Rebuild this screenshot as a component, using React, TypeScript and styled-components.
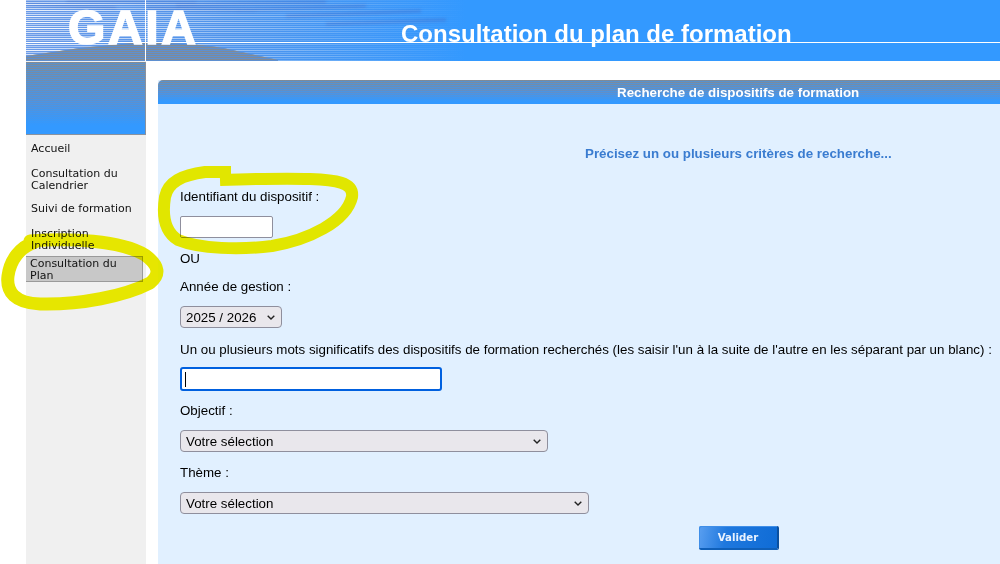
import styled, { createGlobalStyle } from "styled-components";

const GlobalStyle = createGlobalStyle`
  html, body {
    margin: 0;
    padding: 0;
    background: #fff;
    overflow: hidden;
  }
  body {
    font-family: "Liberation Sans", Arial, sans-serif;
  }
`;

const menuItems = [
  { label: "Accueil", top: 8 },
  { label: "Consultation du Calendrier", top: 13 },
  { label: "Suivi de formation", top: 11 },
  { label: "Inscription Individuelle", top: 13 },
];

// pseudo random opacity per row so the sky streaks don't look regular
const rowOpacity = (y: number) => 0.4 + (((y * 37) % 17) / 17) * 0.6;
const skyRows = Array.from({ length: 31 }, (_, i) => i * 2);
const hillPath = "M0 56 L54 48 L107 43 L135 43 C160 44 180 45 197 48 L252 60 L252 61 L0 61 Z";
const cloudStreaks = [
  "M40 1 L170 3",
  "M150 5 L300 2",
  "M210 10 L340 6",
  "M120 8 L230 10",
  "M260 16 L395 11",
  "M300 24 L420 20",
  "M0 4 L90 8",
];

const Highlights = () => (
  <Overlay width="1000" height="564" viewBox="0 0 1000 564">
    <g fill="none" stroke="#e6e600" strokeLinejoin="round">
      <path
        strokeWidth="12"
        d="M231 172 L205 172 C182 175 168 182 165 197 C162 216 165 232 178 240 C200 249 240 250 272 246 C308 240 346 222 352 197 C354 182 335 180 310 179 C285 178 250 179 220 180"
      />
      <path
        strokeWidth="13"
        strokeLinecap="round"
        d="M30 241 C70 238 120 240 145 255 C160 266 160 275 150 283 C125 296 80 305 40 304 C15 303 6 292 8 276 C10 260 20 247 35 242"
      />
    </g>
  </Overlay>
);

const Sky = () => (
  <SkyArt width="974" height="61" viewBox="0 0 974 61">
    <defs>
      <linearGradient id="base" x1="0" y1="0" x2="440" y2="0" gradientUnits="userSpaceOnUse">
        <stop offset="0" stopColor="#6a9ae8" />
        <stop offset="0.45" stopColor="#4f94ec" />
        <stop offset="1" stopColor="#3399ff" />
      </linearGradient>
      <linearGradient id="streak" x1="0" y1="0" x2="440" y2="0" gradientUnits="userSpaceOnUse">
        <stop offset="0" stopColor="#fff" stopOpacity="1" />
        <stop offset="0.45" stopColor="#fff" stopOpacity="0.5" />
        <stop offset="1" stopColor="#fff" stopOpacity="0" />
      </linearGradient>
      <pattern id="lines" width="4" height="2" patternUnits="userSpaceOnUse">
        <rect width="4" height="1" fill="#5f90d0" />
      </pattern>
      <filter id="soft" filterUnits="userSpaceOnUse" x="0" y="0" width="500" height="61">
        <feGaussianBlur stdDeviation="1.5" />
      </filter>
    </defs>
    <rect width="974" height="61" fill="url(#base)" />
    <g fill="none" stroke="#3f6fcc" strokeWidth="3" opacity="0.5" filter="url(#soft)">
      {cloudStreaks.map((d) => (
        <path key={d} d={d} />
      ))}
    </g>
    {skyRows.map((y) => (
      <rect key={y} x="0" y={y} width="440" height="1" fill="url(#streak)" opacity={rowOpacity(y)} />
    ))}
    <path d={hillPath} fill="#808a96" />
    <path d={hillPath} fill="url(#lines)" />
  </SkyArt>
);

const SelectField = ({ width, top, label }: { width: number; top: number; label: string }) => (
  <SelectWrap $width={width} $top={top}>
    <Select>
      <option>{label}</option>
    </Select>
    <Chevron width="8" height="5" viewBox="0 0 8 5">
      <path d="M0.7 0.7 L4 4 L7.3 0.7" fill="none" stroke="#222" strokeWidth="1.4" />
    </Chevron>
  </SelectWrap>
);

export default function App() {
  return (
    <>
      <GlobalStyle />
      <Page>
        <Banner>
          <Sky />
          <BannerLogo>GAIA</BannerLogo>
          <BannerTitle>Consultation du plan de formation</BannerTitle>
          <BannerRuleH />
          <BannerRuleV />
        </Banner>
        <Body>
          <Sidebar>
            <SidebarCap />
            <Menu>
              {menuItems.map((item) => (
                <MenuItem key={item.label} $top={item.top}>
                  {item.label}
                </MenuItem>
              ))}
              <MenuItemActive>Consultation du Plan</MenuItemActive>
            </Menu>
          </Sidebar>
          <Panel>
            <PanelHeader>Recherche de dispositifs de formation</PanelHeader>
            <PanelBody>
              <Hint>Précisez un ou plusieurs critères de recherche...</Hint>
              <Label $top={27}>Identifiant du dispositif :</Label>
              <TextInput />
              <Label $top={13}>OU</Label>
              <Label $top={12}>Année de gestion :</Label>
              <SelectField width={102} top={11} label="2025 / 2026" />
              <Label $top={14}>
                Un ou plusieurs mots significatifs des dispositifs de formation recherchés (les saisir l'un à la suite de
                l'autre en les séparant par un blanc) :
              </Label>
              <FocusedInput>
                <Caret />
              </FocusedInput>
              <Label $top={12}>Objectif :</Label>
              <SelectField width={368} top={11} label="Votre sélection" />
              <Label $top={13}>Thème :</Label>
              <SelectField width={409} top={11} label="Votre sélection" />
              <SubmitRow>
                <SubmitButton type="button">Valider</SubmitButton>
              </SubmitRow>
            </PanelBody>
          </Panel>
        </Body>
        <Highlights />
      </Page>
    </>
  );
}

const capBackground = `
  repeating-linear-gradient(to bottom, transparent 0 1px, rgba(51, 153, 255, 0.5) 1px 2px),
  linear-gradient(to bottom, #808a96 0%, #5f90cc 55%, #3399ff 88%)
`;

const Page = styled.div`
  position: relative;
  width: 1000px;
  height: 564px;
  overflow: hidden;
  padding-left: 26px;
  box-sizing: border-box;
`;

const Overlay = styled.svg`
  position: absolute;
  left: 0;
  top: 0;
  pointer-events: none;
  mix-blend-mode: darken;
`;

const Banner = styled.div`
  position: relative;
  height: 61px;
  background: #3399ff;
  overflow: hidden;
`;

const SkyArt = styled.svg`
  position: absolute;
  left: 0;
  top: 0;
`;

const BannerLogo = styled.div`
  position: absolute;
  left: 42px;
  top: 0;
  font-size: 48px;
  font-weight: 700;
  color: #fff;
  letter-spacing: 2.6px;
  -webkit-text-stroke: 1.6px #fff;
`;

const BannerTitle = styled.div`
  position: absolute;
  left: 375px;
  top: 20px;
  font-size: 24px;
  line-height: 28px;
  font-weight: 700;
  color: #fff;
  white-space: nowrap;
`;

const BannerRuleH = styled.div`
  position: absolute;
  left: 0;
  right: 0;
  top: 42px;
  height: 1px;
  background: #fff;
`;

const BannerRuleV = styled.div`
  position: absolute;
  left: 119px;
  top: 0;
  bottom: 0;
  width: 1px;
  background: #fff;
`;

const Body = styled.div`
  display: flex;
  height: 503px;
`;

const Sidebar = styled.div`
  width: 120px;
  flex: none;
  background: #f0f0f0;
`;

const SidebarCap = styled.div`
  height: 73px;
  margin-top: 1px;
  box-sizing: border-box;
  border-right: 1px solid #8a929e;
  border-bottom: 1px solid #8a929e;
  background: ${capBackground};
`;

const Menu = styled.div`
  display: flex;
  flex-direction: column;
  font-family: "DejaVu Sans", Verdana, sans-serif;
  font-size: 11px;
  line-height: 12px;
  color: #111;
`;

const MenuItem = styled.div<{ $top: number }>`
  margin-top: ${(p) => p.$top}px;
  padding: 0 4px 0 5px;
`;

const MenuItemActive = styled.div`
  margin-top: 4px;
  width: 117px;
  height: 26px;
  box-sizing: border-box;
  padding: 1px 4px 0;
  background: #c8c8c8;
  border: 1px solid #9a9a9a;
  border-left: none;
`;

const Panel = styled.div`
  flex: none;
  width: 842px;
  margin: 19px 0 0 12px;
  background: #e1f0ff;
`;

const PanelHeader = styled.div`
  height: 24px;
  box-sizing: border-box;
  padding-left: 459px;
  border-top-left-radius: 5px;
  background: ${capBackground};
  color: #fff;
  font-size: 13.33px;
  font-weight: 700;
  line-height: 25px;
  white-space: nowrap;
`;

const PanelBody = styled.div`
  display: flex;
  flex-direction: column;
  align-items: flex-start;
  padding: 0 0 0 22px;
  font-size: 13.33px;
  line-height: 16px;
  color: #000;
`;

const Hint = styled.div`
  margin: 42px 0 0 405px;
  font-weight: 700;
  color: #3a7cd0;
  white-space: nowrap;
`;

const Label = styled.div<{ $top: number }>`
  margin-top: ${(p) => p.$top}px;
  white-space: nowrap;
`;

const TextInput = styled.input`
  width: 93px;
  height: 22px;
  margin-top: 11px;
  box-sizing: border-box;
  padding: 0 4px;
  background: #fff;
  border: 1px solid #8f8f9d;
  border-radius: 2px;
  outline: none;
`;

const FocusedInput = styled.div`
  display: flex;
  align-items: center;
  width: 262px;
  height: 24px;
  margin-top: 9px;
  box-sizing: border-box;
  padding-left: 3px;
  background: #fff;
  border: 2px solid #0060df;
  border-radius: 3px;
`;

const Caret = styled.span`
  width: 1px;
  height: 15px;
  background: #000;
`;

const SelectWrap = styled.div<{ $width: number; $top: number }>`
  position: relative;
  width: ${(p) => p.$width}px;
  height: 22px;
  margin-top: ${(p) => p.$top}px;
`;

const Select = styled.select`
  appearance: none;
  width: 100%;
  height: 100%;
  box-sizing: border-box;
  padding: 0 0 0 5px;
  background-color: #e9e7ec;
  border: 1px solid #8f8f9d;
  border-radius: 4px;
  color: #000;
  font-family: "Liberation Sans", Arial, sans-serif;
  font-size: 13.33px;
`;

const Chevron = styled.svg`
  position: absolute;
  right: 7px;
  top: 9px;
  pointer-events: none;
`;

const SubmitRow = styled.div`
  display: flex;
  width: 100%;
  margin-top: 12px;
  padding-left: 519px;
  box-sizing: border-box;
`;

const SubmitButton = styled.button`
  width: 80px;
  height: 24px;
  padding: 0;
  border: none;
  border-radius: 2px;
  border-right: 2px solid #0a4f9e;
  border-bottom: 2px solid #0f5fb8;
  box-shadow: inset 1px 1px 0 #3f8ee8;
  background: linear-gradient(100deg, #5a9ff0 0%, #1f78de 35%, #0f6cd6 100%);
  color: #eaf3ff;
  font-family: "DejaVu Sans", Verdana, sans-serif;
  font-size: 10.2px;
  font-weight: 700;
`;
